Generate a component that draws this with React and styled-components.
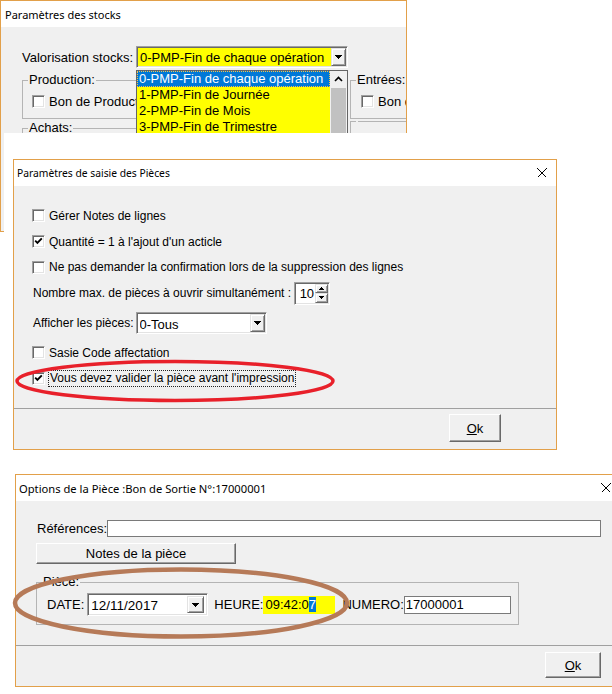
import React from 'react';
import styled, { createGlobalStyle, css } from 'styled-components';

const Global = createGlobalStyle`
  html, body { margin: 0; padding: 0; background: #fff; }
  body { font-family: "Liberation Sans", Arial, sans-serif; color: #000; }
  * { box-sizing: border-box; }
`;

const sunken = css`
  border: 1px solid;
  border-color: #a0a0a0 #fff #fff #a0a0a0;
  box-shadow: inset 1px 1px 0 #696969, inset -1px -1px 0 #e3e3e3;
`;

const raised = css`
  border: 1px solid;
  border-color: #e3e3e3 #696969 #696969 #e3e3e3;
  box-shadow: inset 1px 1px 0 #fff, inset -1px -1px 0 #a0a0a0;
  background: #f0f0f0;
`;

const Canvas = styled.div`
  position: relative;
  width: 612px;
  height: 694px;
  overflow: hidden;
  background: #fff;
`;

const Window = styled.div`
  position: absolute;
  left: ${p => p.$x}px;
  top: ${p => p.$y}px;
  width: ${p => p.$w}px;
  height: ${p => p.$h}px;
  border: 1px solid #e2a04a;
  ${p => p.$open && 'border-right: none;'}
  background: #f0f0f0;
  display: flex;
  flex-direction: column;
  overflow: hidden;
`;

const Sheet = styled.div`
  position: absolute;
  left: 4px;
  top: 133px;
  width: 420px;
  height: 110px;
  background: #fff;
`;

const TitleBar = styled.div`
  flex: none;
  height: 26px;
  background: #fff;
  display: flex;
  align-items: center;
  justify-content: space-between;
  padding: 0 ${p => p.$pr}px 0 ${p => p.$pl}px;
  font-family: "Noto Sans", "Segoe UI", sans-serif;
  font-size: ${p => p.$fs}px;
  white-space: nowrap;
`;

const CloseIcon = () => (
  <svg width="10" height="10" viewBox="0 0 10 10" shapeRendering="crispEdges">
    <path d="M0.5 0.5 L9.5 9.5 M9.5 0.5 L0.5 9.5" stroke="#000" strokeWidth="1" fill="none" />
  </svg>
);

/* ---------- shared controls ---------- */

const Text = styled.span`
  font-size: ${p => p.$fs || 13}px;
  white-space: nowrap;
  margin-left: ${p => p.$ml || 0}px;
  margin-right: ${p => p.$mr || 0}px;
`;

const BoxWrap = styled.span`
  flex: none;
  width: 13px;
  height: 13px;
  background: #fff;
  ${sunken}
  display: flex;
  align-items: center;
  justify-content: center;
`;

const CheckBox = ({ checked }) => (
  <BoxWrap>
    {checked && (
      <svg width="9" height="9" viewBox="0 0 9 9">
        <path d="M1.2 3.6 L3.4 5.8 L7.8 1.4" stroke="#000" strokeWidth="1.9" fill="none" />
      </svg>
    )}
  </BoxWrap>
);

const CheckRow = styled.div`
  display: flex;
  align-items: center;
  gap: 4px;
  height: ${p => p.$h || 13}px;
  margin-left: ${p => p.$ml || 0}px;
  font-size: ${p => p.$fs || 12}px;
  white-space: nowrap;
`;

const FocusText = styled.span`
  border: 1px dotted #222;
  padding: 0 1px 1px 1px;
  margin-left: -1px;
  line-height: 14px;
`;

const Combo = styled.div`
  flex: none;
  width: ${p => p.$w}px;
  height: ${p => p.$h}px;
  margin-left: ${p => p.$ml || 0}px;
  background: ${p => p.$bg || '#fff'};
  ${sunken}
  display: flex;
  align-items: center;
  padding: ${p => p.$pad || '1px 1px 1px 3px'};
  font-size: ${p => p.$fs || 13}px;
`;

const ComboText = styled.span`
  flex: 1;
  white-space: nowrap;
  overflow: hidden;
  padding-top: ${p => p.$pt || 0}px;
`;

const DropButton = styled.span`
  flex: none;
  width: ${p => p.$w || 15}px;
  align-self: stretch;
  ${raised}
  display: flex;
  align-items: center;
  justify-content: center;
`;

const Arrow = ({ up }) => (
  <svg width="7" height="4" viewBox="0 0 7 4" shapeRendering="crispEdges">
    <path d={up ? 'M3.5 0 L7 4 L0 4 Z' : 'M0 0 L7 0 L3.5 4 Z'} fill="#000" />
  </svg>
);

const TinyArrow = ({ up }) => (
  <svg width="5" height="3" viewBox="0 0 5 3" shapeRendering="crispEdges">
    <path d={up ? 'M2.5 0 L5 3 L0 3 Z' : 'M0 0 L5 0 L2.5 3 Z'} fill="#000" />
  </svg>
);

const PushButton = styled.button`
  flex: none;
  width: ${p => p.$w}px;
  height: ${p => p.$h}px;
  margin-top: ${p => p.$mt || 0}px;
  ${raised}
  border-color: #fff #696969 #696969 #fff;
  box-shadow: inset -1px -1px 0 #a0a0a0;
  font-family: "Liberation Sans", Arial, sans-serif;
  font-size: 13px;
  color: #000;
  padding: 0;
  display: flex;
  align-items: center;
  justify-content: center;
`;

const Footer = styled.div`
  flex: none;
  height: ${p => p.$h}px;
  border-top: 1px solid #a0a0a0;
  display: flex;
  justify-content: flex-end;
  align-items: flex-start;
  padding: ${p => p.$pt}px ${p => p.$pr}px 0 0;
`;

const Group = styled.fieldset`
  margin: ${p => p.$mt || 0}px 0 0 0;
  min-width: 0;
  width: ${p => (p.$w ? `${p.$w}px` : 'auto')};
  height: ${p => p.$h}px;
  border: 1px solid #b4b4b4;
  padding: ${p => p.$pt || 0}px 0 0 0;
  font-size: 13px;
`;

const Legend = styled.legend`
  padding: 0 1px;
  margin-left: 5px;
  line-height: 14px;
  font-size: 13px;
  white-space: nowrap;
`;

/* ---------- window 1 : Paramètres des stocks ---------- */

const StockBody = styled.div`
  padding: 19px 0 0 21px;
  font-size: 13px;
`;

const FieldLine = styled.div`
  display: flex;
  align-items: center;
  gap: 3px;
`;

const ComboAnchor = styled.div`
  position: relative;
`;

const DropList = styled.div`
  position: absolute;
  left: 0;
  top: 24px;
  width: 212px;
  height: 80px;
  border: 1px solid #646464;
  background: #ffff00;
  display: flex;
`;

const ListItems = styled.div`
  flex: 1;
`;

const ListItem = styled.div`
  height: 16px;
  line-height: 15px;
  padding-left: 2px;
  font-size: 13px;
  white-space: nowrap;
  ${p => p.$selected && css`
    background: #0078d7;
    color: #fff;
    outline: 1px dotted #f6c34a;
    outline-offset: -1px;
  `}
`;

const ScrollBar = styled.div`
  flex: none;
  width: 17px;
  display: flex;
  flex-direction: column;
  background: #f0f0f0;
`;

const ScrollUp = styled.div`
  height: 16px;
  display: flex;
  align-items: center;
  justify-content: center;
`;

const ScrollThumb = styled.div`
  flex: 1;
  margin: 1px 1px 0 1px;
  background: #c1c1c1;
`;

const GroupGrid = styled.div`
  display: grid;
  grid-template-columns: 318px 90px;
  column-gap: 10px;
  row-gap: 2px;
  margin-top: 5px;
`;

/* ---------- window 2 : Paramètres de saisie ---------- */

const SaisieBody = styled.div`
  flex: 1;
  padding: 16px 0 0 18px;
  font-size: 12px;
`;

const Line = styled.div`
  display: flex;
  align-items: center;
  height: ${p => p.$h}px;
  white-space: nowrap;
`;

const Spin = styled.div`
  width: 36px;
  height: 23px;
  background: #fff;
  ${sunken}
  display: flex;
  padding: 1px;
  margin-left: 3px;
`;

const SpinValue = styled.span`
  flex: 1;
  text-align: right;
  font-size: 13px;
  line-height: 19px;
  padding-right: 1px;
`;

const SpinButtons = styled.div`
  flex: none;
  width: 13px;
  display: flex;
  flex-direction: column;
`;

const SpinBtn = styled.span`
  flex: 1;
  ${raised}
  display: flex;
  align-items: center;
  justify-content: center;
`;

/* ---------- window 3 : Options de la Pièce ---------- */

const OptionsBody = styled.div`
  flex: 1;
  padding: 19px 11px 0 20px;
  font-size: 13px;
  display: flex;
  flex-direction: column;
  align-items: flex-start;
`;

const RefLine = styled.div`
  align-self: stretch;
  display: flex;
  align-items: center;
  height: 17px;
  padding-left: 1px;
`;

const Input = styled.div`
  flex: ${p => (p.$w ? 'none' : '1')};
  width: ${p => (p.$w ? `${p.$w}px` : 'auto')};
  height: ${p => p.$h}px;
  background: ${p => p.$bg || '#fff'};
  border: 1px solid ${p => p.$bc || '#7a7a7a'};
  display: flex;
  align-items: center;
  padding-left: 1px;
  font-size: 13px;
  white-space: nowrap;
`;

const Selected = styled.span`
  background: #0078d7;
  color: #fff;
`;

const PieceRow = styled.div`
  display: flex;
  align-items: center;
  height: 23px;
  padding-left: 10px;
`;

/* ---------- annotations ---------- */

const Annotation = styled.svg`
  position: absolute;
  left: ${p => p.$x}px;
  top: ${p => p.$y}px;
  pointer-events: none;
`;

export default function App() {
  return (
    <>
      <Global />
      <Canvas>
        {/* Window 1 */}
        <Window $x={0} $y={0} $w={407} $h={232}>
          <TitleBar $pl={4} $pr={8} $fs={11}>Paramètres des stocks</TitleBar>
          <StockBody>
            <FieldLine>
              <Text>Valorisation stocks:</Text>
              <ComboAnchor>
                <Combo $w={212} $h={22} $bg="#ffff00" $fs={13}>
                  <ComboText>0-PMP-Fin de chaque opération</ComboText>
                  <DropButton><Arrow /></DropButton>
                </Combo>
                <DropList>
                  <ListItems>
                    <ListItem $selected>0-PMP-Fin de chaque opération</ListItem>
                    <ListItem>1-PMP-Fin de Journée</ListItem>
                    <ListItem>2-PMP-Fin de Mois</ListItem>
                    <ListItem>3-PMP-Fin de Trimestre</ListItem>
                  </ListItems>
                  <ScrollBar>
                    <ScrollUp>
                      <svg width="9" height="6" viewBox="0 0 9 6">
                        <path d="M1 5 L4.5 1.5 L8 5" stroke="#000" strokeWidth="1.6" fill="none" />
                      </svg>
                    </ScrollUp>
                    <ScrollThumb />
                  </ScrollBar>
                </DropList>
              </ComboAnchor>
            </FieldLine>
            <GroupGrid>
              <Group $h={46} $pt={8}>
                <Legend>Production:</Legend>
                <CheckRow $fs={13} $ml={9}><CheckBox /><span>Bon de Production</span></CheckRow>
              </Group>
              <Group $h={46} $pt={8}>
                <Legend>Entrées:</Legend>
                <CheckRow $fs={13} $ml={10}><CheckBox /><span>Bon d'entrée</span></CheckRow>
              </Group>
              <Group $h={46}>
                <Legend>Achats:</Legend>
              </Group>
              <Group $h={46}>
                <Legend> </Legend>
              </Group>
            </GroupGrid>
          </StockBody>
        </Window>

        <Sheet />

        {/* Window 2 */}
        <Window $x={13} $y={159} $w={544} $h={291}>
          <TitleBar $pl={3} $pr={9} $fs={10.3}>
            <span>Paramètres de saisie des Pièces</span>
            <CloseIcon />
          </TitleBar>
          <SaisieBody>
            <Line $h={27}><CheckRow><CheckBox /><span>Gérer Notes de lignes</span></CheckRow></Line>
            <Line $h={25}><CheckRow><CheckBox checked /><span>Quantité = 1 à l'ajout d'un acticle</span></CheckRow></Line>
            <Line $h={26}><CheckRow><CheckBox /><span>Ne pas demander la confirmation lors de la suppression des lignes</span></CheckRow></Line>
            <Line $h={26}>
              <Text $fs={12} $ml={1}>Nombre max. de pièces à ouvrir simultanément :</Text>
              <Spin>
                <SpinValue>10</SpinValue>
                <SpinButtons>
                  <SpinBtn><TinyArrow up /></SpinBtn>
                  <SpinBtn><TinyArrow /></SpinBtn>
                </SpinButtons>
              </Spin>
            </Line>
            <Line $h={34}>
              <Text $fs={12} $ml={1}>Afficher les pièces:</Text>
              <Combo $w={131} $h={22} $fs={13} $ml={2}>
                <ComboText $pt={2}>0-Tous</ComboText>
                <DropButton><Arrow /></DropButton>
              </Combo>
            </Line>
            <Line $h={25}><CheckRow><CheckBox /><span>Sasie Code affectation</span></CheckRow></Line>
            <Line $h={27}><CheckRow><CheckBox checked /><FocusText>Vous devez valider la pièce avant l'impression</FocusText></CheckRow></Line>
          </SaisieBody>
          <Footer $h={41} $pt={5} $pr={55}>
            <PushButton $w={52} $h={28}><u>O</u>k</PushButton>
          </Footer>
        </Window>

        {/* Window 3 */}
        <Window $x={15} $y={474} $w={597} $h={213} $open>
          <TitleBar $pl={3} $pr={1} $fs={11.2}>
            <span>Options de la Pièce :Bon de Sortie N°:17000001</span>
            <CloseIcon />
          </TitleBar>
          <OptionsBody>
            <RefLine>
              <Text>Références:</Text>
              <Input $h={17} />
            </RefLine>
            <PushButton as="div" $w={200} $h={21} $mt={6}>Notes de la pièce</PushButton>
            <Group $h={50} $pt={4} $mt={11} $w={483}>
              <Legend>Pièce:</Legend>
              <PieceRow>
                <Text $mr={3}>DATE:</Text>
                <Combo $w={121} $h={23} $fs={13.5} $pad="2px 3px 2px 3px">
                  <ComboText $pt={2}>12/11/2017</ComboText>
                  <DropButton $w={17}><Arrow /></DropButton>
                </Combo>
                <Text $ml={6}>HEURE:</Text>
                <Input $w={72} $h={18} $bg="#ffff00" $bc="#ffff00">
                  09:42:0<Selected>7</Selected>
                </Input>
                <Text $ml={7}>NUMERO:</Text>
                <Input $w={107} $h={18}>17000001</Input>
              </PieceRow>
            </Group>
          </OptionsBody>
          <Footer $h={41} $pt={6} $pr={11}>
            <PushButton $w={56} $h={26}><u>O</u>k</PushButton>
          </Footer>
        </Window>

        <Annotation $x={14} $y={359} width="322" height="44" viewBox="0 0 322 44">
          <ellipse cx="161" cy="22" rx="158" ry="19.5" fill="none" stroke="#e8202a" strokeWidth="3.5" />
        </Annotation>
        <Annotation $x={11} $y={566} width="340" height="74" viewBox="0 0 340 74">
          <ellipse cx="170" cy="37" rx="166" ry="33.5" fill="none" stroke="#b67a58" strokeWidth="4.5" />
        </Annotation>
      </Canvas>
    </>
  );
}
